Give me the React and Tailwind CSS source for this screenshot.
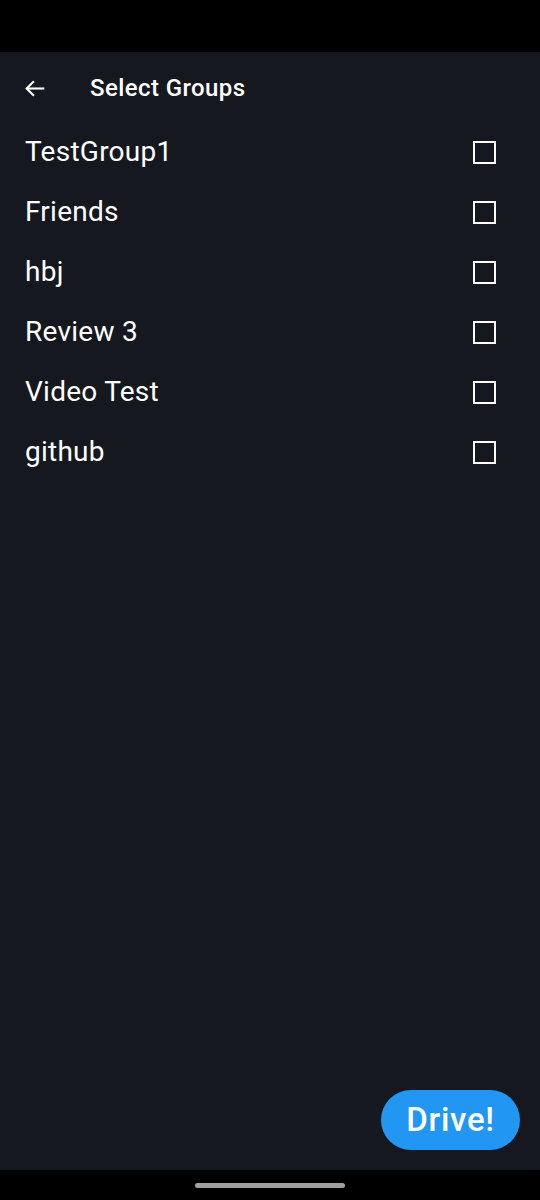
import React from "react";

const groups = ["TestGroup1", "Friends", "hbj", "Review 3", "Video Test", "github"];

export default function App() {
  return (
    <div className="flex h-[1200px] w-[540px] flex-col bg-black" style={{ fontFamily: "Roboto, 'Noto Sans', sans-serif" }}>
      <div className="h-[52px] shrink-0 bg-black" />
      <div className="flex flex-1 flex-col bg-[#161820]">
        <div className="flex h-[70px] items-center pt-[2px]">
          <div className="flex w-[90px] items-center pl-[23px]">
            <svg width="25" height="25" viewBox="0 0 24 24" fill="none" stroke="white" strokeWidth="2" strokeLinecap="butt">
              <path d="M20.5 12H3.5" />
              <path d="M10.5 5L3.5 12L10.5 19" />
            </svg>
          </div>
          <span className="text-[24px] font-medium tracking-[0.4px] text-white">Select Groups</span>
        </div>
        {groups.map((g) => (
          <div key={g} className="flex h-[60px] items-center justify-between pl-[25px] pr-[44px]">
            <span className="text-[28px] tracking-[0.25px] text-white">{g}</span>
            <div className="h-[23px] w-[23px] border-2 border-white" />
          </div>
        ))}
        <div className="mt-auto flex justify-end pb-[20px] pr-[20px]">
          <button className="flex h-[60px] w-[139px] items-center justify-center rounded-full bg-[#2196f3] text-[33px] font-medium tracking-[0.7px] text-white">
            Drive!
          </button>
        </div>
      </div>
      <div className="flex h-[30px] shrink-0 items-center justify-center bg-black">
        <div className="h-[5px] w-[150px] rounded-full bg-[#a0a0a0]" />
      </div>
    </div>
  );
}
